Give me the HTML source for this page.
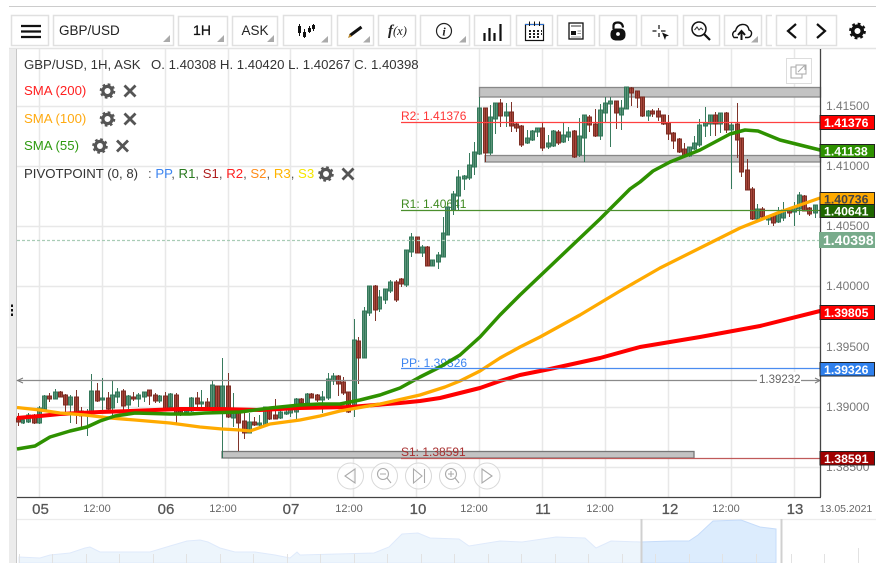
<!DOCTYPE html>
<html><head><meta charset="utf-8"><title>GBP/USD</title>
<style>
html,body{margin:0;padding:0;background:#fff;width:882px;height:573px;overflow:hidden}
svg{display:block}
text{font-family:"Liberation Sans",Arial,sans-serif}
.ax{font-size:12px;fill:#777}
.d{font-size:15px;fill:#555;text-anchor:middle;stroke:#555;stroke-width:.25}
.h{font-size:11px;fill:#666;text-anchor:middle}
.lg{font-size:13.2px}
.p{font-size:12.3px;font-weight:bold;fill:#fff}
.b{fill:#fff;stroke:#e0e0e0;stroke-width:1.5}
.t{fill:#aaa}
polyline{stroke-linejoin:round}
</style></head><body>
<svg width="882" height="573" viewBox="0 0 882 573" xmlns="http://www.w3.org/2000/svg">
<defs>
<g id="gear"><circle r="4.6" fill="none" stroke="#555" stroke-width="3.2"/><circle r="6.6" fill="none" stroke="#555" stroke-width="2.4" stroke-dasharray="2.6 2.58"/></g>
<path id="x" d="M-5.5-5.5L5.5 5.5M5.5-5.5L-5.5 5.5" stroke="#555" stroke-width="2.8" fill="none"/>
</defs>
<!-- top rules -->
<path d="M9 6.5H876" stroke="#ccc" stroke-width="1"/>
<path d="M9 48.5H876" stroke="#e4e4e4" stroke-width="1.5"/>
<!-- toolbar buttons -->
<rect class="b" x="11.5" y="15.5" width="37" height="30"/>
<rect class="b" x="53.5" y="15.5" width="120" height="30"/>
<rect class="b" x="178.5" y="16.5" width="49" height="29"/>
<rect class="b" x="232.5" y="16.5" width="45" height="29"/>
<rect class="b" x="283.5" y="15.5" width="48" height="30"/>
<rect class="b" x="337.5" y="15.5" width="36" height="30"/>
<rect class="b" x="378.5" y="15.5" width="37" height="30"/>
<rect class="b" x="420.5" y="15.5" width="49" height="30"/>
<rect class="b" x="474.5" y="15.5" width="36" height="30"/>
<rect class="b" x="516.5" y="15.5" width="36" height="30"/>
<rect class="b" x="557.5" y="15.5" width="37" height="30"/>
<rect class="b" x="599.5" y="15.5" width="37" height="30"/>
<rect class="b" x="641.5" y="15.5" width="36" height="30"/>
<rect class="b" x="683.5" y="15.5" width="36" height="30"/>
<rect class="b" x="724.5" y="15.5" width="37" height="30"/>
<path d="M772 15.5H766.5V45.5H772" fill="none" stroke="#e0e0e0" stroke-width="1.5"/>
<rect class="b" x="776.5" y="15.5" width="60" height="30"/>
<path d="M806.5 15.5V45.5" stroke="#e0e0e0" stroke-width="1.5"/>
<!-- dropdown corners -->
<path class="t" d="M170 35V42H163zM224 35V42H217zM274 35V42H267zM328 36V42.5H321zM370 36V42.5H363zM466 36V42.5H459zM758 36V42.5H751z"/>
<!-- hamburger -->
<path d="M21 26H41M21 31.5H41M21 37H41" stroke="#111" stroke-width="2.2"/>
<text x="59" y="35" font-size="13.5" fill="#222">GBP/USD</text>
<text x="202" y="35" font-size="14" fill="#111" text-anchor="middle" stroke="#111" stroke-width=".3">1H</text>
<text x="255" y="35" font-size="13.5" fill="#222" text-anchor="middle">ASK</text>
<!-- candles icon -->
<path d="M299.5 24V36M304.5 29V38M309.5 26V33M313.5 24V31" stroke="#111" stroke-width="1"/>
<path d="M298 26h3v7h-3zM303 32h3v5h-3zM308 28h3v4h-3zM312 25h3v4h-3z" fill="#111"/>
<!-- pen -->
<path d="M350 35.5L361.5 27" stroke="#111" stroke-width="3"/><path d="M348 38L349.5 34 352 36.5z" fill="#b8862a"/>
<text x="388" y="35" font-size="15" font-style="italic" style="font-family:'Liberation Serif',serif" fill="#222" font-weight="bold">f<tspan font-size="12.5" font-weight="normal">(x)</tspan></text>
<!-- info -->
<circle cx="444" cy="31" r="7.5" fill="none" stroke="#222" stroke-width="1.2"/>
<text x="444" y="35.5" font-size="12" font-style="italic" font-weight="bold" text-anchor="middle" style="font-family:'Liberation Serif',serif" fill="#222">i</text>
<!-- bars -->
<path d="M484.5 41V33M489.5 41V28M494.5 41V33M500.5 41V24" stroke="#111" stroke-width="2.2"/>
<!-- calendar -->
<rect x="525.5" y="24.5" width="18" height="16" fill="#fff" stroke="#111" stroke-width="1.2"/>
<path d="M525 24.5H544" stroke="#2a6fd0" stroke-width="1"/>
<path d="M529.5 21.5V26M534.5 21.5V26M539.5 21.5V26" stroke="#111" stroke-width="1"/>
<path d="M529 30h2v2h-2zM533 30h2v2h-2zM537 30h2v2h-2zM541 30h1v2h-1zM529 33h2v2h-2zM533 33h2v2h-2zM537 33h2v2h-2zM541 33h1v2h-1zM529 36h2v2h-2zM533 36h2v2h-2zM537 36h2v2h-2z" fill="#222"/>
<!-- news -->
<rect x="569" y="23" width="14" height="16" fill="#fff" stroke="#111" stroke-width="1.3"/>
<path d="M571 26H581" stroke="#777" stroke-width="1.5"/>
<rect x="571" y="31" width="5" height="4" fill="#111"/>
<path d="M577.5 31H581M577.5 33.5H581M571 37H581" stroke="#999" stroke-width="1"/>
<!-- lock -->
<path d="M613.5 29V26Q613.5 22.5 618 22.5Q622.5 22.5 623 27.5" fill="none" stroke="#111" stroke-width="2.2"/>
<rect x="610.5" y="28.5" width="15" height="12" rx="5" fill="#111"/>
<circle cx="618" cy="34" r="1.9" fill="#fff"/>
<!-- crosshair -->
<path d="M659 25V29M659 33V37M652.5 31H656.5M661 31H665.5" stroke="#111" stroke-width="1.2"/>
<path d="M662 32.5L669 35.5 666 36.5 665 40z" fill="#111"/>
<!-- chart zoom -->
<circle cx="699" cy="29" r="7" fill="none" stroke="#111" stroke-width="1.5"/>
<path d="M694.5 30L697 27 699 30 701 28 703 30" fill="none" stroke="#333" stroke-width="1"/>
<path d="M704 34L710 40" stroke="#111" stroke-width="2.2"/>
<!-- cloud -->
<path d="M738 37.5H734Q732 35 733 33Q734 31 735.5 31Q737 25 742 24.5Q748 24 749 30Q752 31 751.5 34Q751 37 748 37.5H745" fill="none" stroke="#111" stroke-width="1.4"/>
<path d="M741.5 40V32M738 35L741.5 31 745 35" fill="none" stroke="#111" stroke-width="2"/>
<!-- nav arrows -->
<path d="M796 24L788 31 796 38" fill="none" stroke="#111" stroke-width="2.2"/>
<path d="M817 24L825 31 817 38" fill="none" stroke="#111" stroke-width="2.2"/>
<!-- top gear -->
<g transform="translate(857.5,31)"><circle r="4.8" fill="none" stroke="#111" stroke-width="3.6"/><circle r="7.2" fill="none" stroke="#111" stroke-width="2.4" stroke-dasharray="2.8 2.85"/></g>

<!-- left strip -->
<rect x="9" y="49" width="7" height="514" fill="#ececec"/>
<path d="M16.5 49V563" stroke="#c8c8c8" stroke-width="1"/>
<path d="M12 304.5v2.5M12 309v2.5M12 313.5v2.5" stroke="#111" stroke-width="2"/>
<!-- grid -->
<path d="M39.5 49V497M102.5 49V497M165.5 49V497M228.5 49V497M290.5 49V497M353.5 49V497M416.5 49V497M479.5 49V497M542.5 49V497M605.5 49V497M668.5 49V497M731.5 49V497M794.5 49V497" stroke="#e8e8e8" stroke-width="1.5"/>
<path d="M17 106.5H820M17 166.5H820M17 226.5H820M17 286.5H820M17 347.5H820M17 407.5H820M17 467.5H820" stroke="#e8e8e8" stroke-width="1.5"/>
<!-- pivot text -->
<text x="401" y="120" font-size="12" fill="#ff3535">R2: 1.41376</text>
<text x="401" y="208" font-size="12" fill="#3f8a20">R1: 1.40641</text>
<text x="401" y="367" font-size="12" fill="#3d85f0">PP: 1.39326</text>
<!-- boxes -->
<rect x="479.5" y="87.5" width="341" height="9.5" fill="#c3c3c3" stroke="#888" stroke-width="1.3"/>
<rect x="485" y="155.5" width="335.5" height="6.5" fill="#c3c3c3" stroke="#888" stroke-width="1.3"/>
<rect x="222" y="451.5" width="472" height="6.5" fill="#c3c3c3" stroke="#777" stroke-width="1.3"/>
<text x="401" y="456" font-size="12" fill="#a83030">S1: 1.38591</text>
<!-- candles green -->
<path fill="#5b9479" stroke="#2f7556" stroke-width=".95" d="M23.5 418V424M21.5 420h3v3h-3zM28.5 413V423M26.5 415h4v7h-4zM39.5 406V424M37.5 408h4v15h-4zM44.5 395V412M42.5 396h4v13h-4zM55.5 389V399M53.5 392h4v7h-4zM70.5 395V423M68.5 397h4v8h-4zM87.5 409V436M85.5 413h4v3h-4zM91.5 374V417M89.5 391h4v22h-4zM102.5 378V412M100.5 398h4v2h-4zM112.5 381V416M110.5 395h4v13h-4zM117.5 388V403M115.5 392h4v5h-4zM128.5 395V409M126.5 396h4v9h-4zM138.5 393V407M136.5 395h4v4h-4zM144.5 392V402M142.5 392h4v5h-4zM159.5 395V403M157.5 396h4v5h-4zM170.5 393V409M168.5 394h4v13h-4zM186.5 407V413M184.5 408h4v4h-4zM191.5 397V412M189.5 398h4v13h-4zM201.5 390V407M199.5 402h4v2h-4zM212.5 380V413M210.5 385h4v24h-4zM222.5 358V458M220.5 386h4v27h-4zM233.5 393V427M231.5 412h4v6h-4zM249.5 413V433M247.5 422h4v11h-4zM259.5 415V427M257.5 423h4v2h-4zM265.5 407V426M263.5 407h4v18h-4zM280.5 408V419M278.5 412h4v6h-4zM286.5 410V415M284.5 412h4v2h-4zM290.5 407V417M288.5 410h4v3h-4zM296.5 398V419M294.5 399h4v13h-4zM307.5 393V404M305.5 394h4v9h-4zM322.5 391V413M320.5 397h4v3h-4zM328.5 373V400M326.5 379h4v19h-4zM333.5 373V385M331.5 376h4v5h-4zM354.5 319V417M352.5 340h4v65h-4zM364.5 307V358M362.5 311h4v47h-4zM369.5 286V316M367.5 286h4v27h-4zM379.5 290V312M377.5 297h4v12h-4zM385.5 289V304M383.5 289h4v11h-4zM390.5 280V293M388.5 282h4v9h-4zM406.5 250V287M404.5 250h4v35h-4zM411.5 233V257M409.5 237h4v15h-4zM422.5 245V257M420.5 247h4v6h-4zM432.5 260V266M430.5 260h4v6h-4zM438.5 252V269M436.5 255h4v7h-4zM443.5 217V257M441.5 233h4v24h-4zM447.5 207V235M445.5 207h4v28h-4zM453.5 191V215M451.5 194h4v16h-4zM458.5 170V210M456.5 177h4v19h-4zM464.5 175V190M462.5 176h4v3h-4zM469.5 153V180M467.5 165h4v13h-4zM474.5 142V175M472.5 152h4v15h-4zM479.5 97V155M477.5 108h4v46h-4zM490.5 105V155M488.5 117h4v36h-4zM495.5 103V134M493.5 103h4v16h-4zM506.5 103V127M504.5 112h4v4h-4zM527.5 130V144M525.5 138h4v5h-4zM532.5 130V141M530.5 131h4v9h-4zM537.5 128V137M535.5 128h4v4h-4zM548.5 135V149M546.5 143h4v4h-4zM553.5 130V147M551.5 131h4v15h-4zM563.5 122V143M561.5 135h4v7h-4zM568.5 127V141M566.5 132h4v5h-4zM579.5 118V157M577.5 136h4v19h-4zM584.5 115V162M582.5 115h4v23h-4zM600.5 104V140M598.5 110h4v26h-4zM605.5 97V122M603.5 103h4v10h-4zM610.5 97V147M608.5 101h4v3h-4zM621.5 100V130M619.5 108h4v7h-4zM626.5 87V109M624.5 87h4v22h-4zM648.5 110V121M646.5 111h4v5h-4zM689.5 147V157M687.5 147h4v9h-4zM694.5 136V150M692.5 143h4v6h-4zM699.5 119V147M697.5 125h4v20h-4zM705.5 107V137M703.5 123h4v3h-4zM710.5 115V136M708.5 115h4v9h-4zM720.5 113V133M718.5 113h4v11h-4zM731.5 123V189M729.5 125h4v5h-4zM757.5 204V219M755.5 209h4v10h-4zM768.5 215V225M766.5 216h4v4h-4zM778.5 207V223M776.5 214h4v8h-4zM783.5 202V221M781.5 210h4v8h-4zM794.5 202V226M792.5 207h4v5h-4zM799.5 192V215M797.5 195h4v14h-4zM815.5 205V218M813.5 205h4v8h-4z"/>
<!-- candles red -->
<path fill="#a8473c" stroke="#7a2a20" stroke-width=".95" d="M18.5 413V426M16.5 418h4v4h-4zM34.5 414V424M32.5 415h4v8h-4zM49.5 393V402M47.5 396h4v3h-4zM60.5 391V397M58.5 392h4v5h-4zM65.5 394V412M63.5 395h4v10h-4zM76.5 390V424M74.5 397h4v15h-4zM81.5 407V427M79.5 411h4v5h-4zM97.5 383V402M95.5 391h4v10h-4zM108.5 392V413M106.5 398h4v11h-4zM123.5 389V412M121.5 391h4v15h-4zM133.5 392V401M131.5 397h4v2h-4zM149.5 390V405M147.5 390h4v6h-4zM155.5 393V403M153.5 395h4v6h-4zM165.5 392V409M163.5 396h4v12h-4zM176.5 393V424M174.5 395h4v18h-4zM180.5 409V416M178.5 411h4v2h-4zM197.5 392V409M195.5 398h4v6h-4zM207.5 398V409M205.5 402h4v6h-4zM217.5 386V413M215.5 386h4v26h-4zM228.5 373V418M226.5 386h4v31h-4zM238.5 410V451M236.5 411h4v12h-4zM244.5 413V439M242.5 421h4v12h-4zM254.5 417V426M252.5 422h4v3h-4zM269.5 407V420M267.5 407h4v12h-4zM275.5 399V419M273.5 415h4v4h-4zM301.5 398V408M299.5 399h4v4h-4zM311.5 393V398M309.5 394h4v4h-4zM317.5 394V402M315.5 395h4v5h-4zM338.5 375V396M336.5 376h4v8h-4zM343.5 377V395M341.5 382h4v11h-4zM348.5 392V413M346.5 392h4v20h-4zM358.5 337V384M356.5 341h4v17h-4zM375.5 285V321M373.5 286h4v24h-4zM396.5 280V302M394.5 282h4v18h-4zM401.5 278V287M399.5 279h4v5h-4zM417.5 237V253M415.5 237h4v16h-4zM427.5 246V266M425.5 247h4v19h-4zM485.5 108V162M483.5 108h4v45h-4zM500.5 99V127M498.5 103h4v13h-4zM511.5 102V132M509.5 112h4v14h-4zM516.5 123V132M514.5 124h4v4h-4zM521.5 125V147M519.5 126h4v19h-4zM542.5 123V151M540.5 128h4v20h-4zM558.5 130V145M556.5 132h4v11h-4zM574.5 130V158M572.5 131h4v26h-4zM589.5 115V132M587.5 117h4v8h-4zM595.5 109V137M593.5 124h4v12h-4zM616.5 101V129M614.5 101h4v12h-4zM631.5 87V106M629.5 88h4v5h-4zM637.5 91V108M635.5 91h4v7h-4zM642.5 97V117M640.5 97h4v19h-4zM652.5 109V117M650.5 111h4v3h-4zM658.5 108V121M656.5 111h4v6h-4zM663.5 115V125M661.5 115h4v9h-4zM668.5 115V140M666.5 123h4v11h-4zM673.5 132V149M671.5 133h4v8h-4zM679.5 138V153M677.5 139h4v13h-4zM684.5 143V157M682.5 149h4v7h-4zM715.5 112V136M713.5 115h4v9h-4zM726.5 112V133M724.5 113h4v17h-4zM737.5 103V158M735.5 124h4v16h-4zM741.5 138V177M739.5 138h4v34h-4zM747.5 159V190M745.5 170h4v20h-4zM752.5 187V220M750.5 189h4v30h-4zM762.5 207V220M760.5 209h4v8h-4zM773.5 214V226M771.5 215h4v8h-4zM789.5 208V217M787.5 210h4v3h-4zM804.5 195V211M802.5 196h4v15h-4zM809.5 207V216M807.5 208h4v6h-4z"/>
<!-- dashed close -->
<path d="M17 240.5H820" stroke="#a9ccb6" stroke-width="1.2" stroke-dasharray="3 2"/>
<!-- MAs -->
<polyline fill="none" stroke="#ff0000" stroke-width="4" points="17,418 40,416 60,414 100,412 130,411 180,409 220,409 260,410 300,408 350,407 400,403 420,401 440,398 460,393 480,388 500,381 520,375 550,369 600,358 640,347 700,337 760,326 820,311"/>
<polyline fill="none" stroke="#ffaa00" stroke-width="3.3" points="17,407.5 40,410 60,413 85,415 110,418 135,420 170,423 200,427 222,429 240,430 250,431 270,424 300,420 320,416 340,411 380,404 420,395 445,387 460,381 480,371 500,358 520,347 540,337 580,315 620,291 660,268 700,248 740,228 780,212 820,198"/>
<polyline fill="none" stroke="#2e9100" stroke-width="3.5" points="17,449 35,446 50,437 70,431 87,427 100,421 115,416 135,413 170,414 190,414 205,413 240,412 270,408 300,405 320,404 340,404 360,400 380,395 400,388 420,377 440,367 460,355 480,337 500,315 520,295 540,276 560,257 580,238 600,219 620,199 630,189 640,182 653,171 670,162 700,150 730,134 745,130 758,131 780,140 800,145 820,150"/>
<!-- level lines -->
<path d="M401 122.500H820" stroke="#ff4040" stroke-width="1.3"/>
<path d="M401 210.500H820" stroke="#4c8f2e" stroke-width="1.2"/>
<path d="M401 368.500H820" stroke="#4a8cf0" stroke-width="1.2"/>
<path d="M401 458.500H820" stroke="#c05a5a" stroke-width="1.3"/>
<!-- ruler -->
<path d="M17 380.500H820" stroke="#8a8a8a" stroke-width="1.2"/>
<path d="M23 378L17.500 380.500 23 383M815 378L820 380.500 815 383" fill="none" stroke="#777" stroke-width="1"/>
<rect x="757" y="372" width="44" height="14" fill="#fff"/>
<text x="759" y="383" font-size="11.5" fill="#666">1.39232</text>
<!-- axes -->
<path d="M820.5 49V497" stroke="#444" stroke-width="1.3"/>
<path d="M17 497.5H821" stroke="#444" stroke-width="1.3"/>
<text class="ax" x="826" y="110">1.41500</text>
<text class="ax" x="826" y="170">1.41000</text>
<text class="ax" x="826" y="230">1.40500</text>
<text class="ax" x="826" y="290">1.40000</text>
<text class="ax" x="826" y="351">1.39500</text>
<text class="ax" x="826" y="411">1.39000</text>
<text class="ax" x="826" y="471">1.38500</text>
<!-- price tags -->
<rect x="820" y="115.5" width="54.5" height="14" fill="#ff0000" stroke="#222"/><text class="p" x="824" y="127">1.41376</text>
<rect x="820" y="144.5" width="54.5" height="13" fill="#2e9100" stroke="#222"/><text class="p" x="824" y="155.5">1.41138</text>
<rect x="820" y="192.5" width="54.5" height="13" fill="#ffaa00" stroke="#222"/><text class="p" x="824" y="203.5" style="fill:#444">1.40736</text>
<rect x="820" y="204.5" width="54.5" height="13" fill="#1f6600" stroke="#222"/><text class="p" x="824" y="215.5">1.40641</text>
<rect x="819" y="232" width="56" height="16" fill="#78ab8b"/><text x="823" y="245" font-size="14" font-weight="bold" fill="#fff">1.40398</text>
<rect x="820" y="305.5" width="54.5" height="14" fill="#ff0000" stroke="#222"/><text class="p" x="824" y="317">1.39805</text>
<rect x="820" y="362.5" width="54.5" height="13.5" fill="#2f80ed" stroke="#222"/><text class="p" x="824" y="374">1.39326</text>
<rect x="820" y="451.5" width="54.5" height="13.5" fill="#a00000" stroke="#222"/><text class="p" x="824" y="463">1.38591</text>
<!-- expand icon -->
<rect x="786.5" y="58.5" width="25" height="25" fill="#fff" stroke="#ddd"/>
<rect x="791" y="67" width="11" height="11" fill="#fff" stroke="#aaa"/>
<rect x="796" y="65" width="10" height="9" fill="#fff" stroke="#aaa"/>
<path d="M798 72L805 65M800 65H805V70" fill="none" stroke="#aaa"/>
<!-- legend -->
<text class="lg" x="24" y="69" fill="#333">GBP/USD, 1H, ASK</text>
<text class="lg" x="151" y="69" fill="#333">O. 1.40308 H. 1.40420 L. 1.40267 C. 1.40398</text>
<text class="lg" x="24" y="95" fill="#ff2020">SMA (200)</text>
<use href="#gear" x="107.5" y="91"/><use href="#x" x="130" y="91"/>
<text class="lg" x="24" y="123" fill="#ffaa11">SMA (100)</text>
<use href="#gear" x="107.5" y="119"/><use href="#x" x="130" y="119"/>
<text class="lg" x="24" y="150" fill="#2e9a10">SMA (55)</text>
<use href="#gear" x="100" y="146"/><use href="#x" x="122.5" y="146"/>
<text class="lg" x="24" y="178" fill="#333">PIVOTPOINT (0, 8)</text>
<text class="lg" x="148" y="178" fill="#555">: <tspan fill="#3d85f0">PP</tspan>, <tspan fill="#2a7a20">R1</tspan>, <tspan fill="#b02020">S1</tspan>, <tspan fill="#ff2020">R2</tspan>, <tspan fill="#ff8c1a">S2</tspan>, <tspan fill="#ffb300">R3</tspan>, <tspan fill="#f5e600">S3</tspan></text>
<use href="#gear" x="326" y="174"/><use href="#x" x="348" y="174"/>
<!-- bottom nav -->
<g fill="#fff" fill-opacity=".6" stroke="#d8d8d8">
<circle cx="350.5" cy="476" r="13"/><circle cx="384.5" cy="476" r="13"/><circle cx="418.5" cy="476" r="13"/><circle cx="452.5" cy="476" r="13"/><circle cx="487" cy="476" r="13"/></g>
<g fill="none" stroke="#aaa" stroke-width="1.1">
<path d="M355 469L345 476 355 483z"/>
<circle cx="383" cy="474" r="5.5"/><path d="M380 474H386M387 478L391 483"/>
<path d="M413.5 469L422 476 413.5 483zM424.5 469V483"/>
<circle cx="451" cy="474" r="5.5"/><path d="M448 474H454M451 471V477M455 478L459 483"/>
<path d="M482 469L492 476 482 483z"/></g>
<!-- date axis -->
<text class="d" x="40.5" y="514">05</text>
<text class="h" x="97" y="512">12:00</text>
<text class="d" x="166" y="514">06</text>
<text class="h" x="223" y="512">12:00</text>
<text class="d" x="291" y="514">07</text>
<text class="h" x="349" y="512">12:00</text>
<text class="d" x="418" y="514">10</text>
<text class="h" x="474" y="512">12:00</text>
<text class="d" x="543" y="514">11</text>
<text class="h" x="600" y="512">12:00</text>
<text class="d" x="670" y="514">12</text>
<text class="h" x="726" y="512">12:00</text>
<text class="d" x="795" y="514">13</text>
<text x="846" y="512" font-size="10.5" fill="#666" text-anchor="middle">13.05.2021</text>
<path d="M17 519.5H876" stroke="#ececec" stroke-width="1.2"/>
<!-- navigator -->
<polygon fill="#edf5fc" stroke="#dfeafb" points="19,563 19,557 40,558 50,555 70,553 85,548 90,547 100,552 120,552 150,552 170,546 187,541 200,540 208,542 220,548 235,552 255,552 275,555 290,558 297,552 300,555 374,553 389,547 402,534 418,533 430,538 459,539 469,546 500,541 522,542 556,537 585,538 596,548 611,541 641,542 641,563"/>
<polygon fill="#dcecfd" stroke="#c6dcfa" points="641,563 641,542 671,541 689,541 698,535 713,521 741,520 760,527 776,529 776,563"/>
<path d="M19.5 554V563M52.5 554V563M86.5 554V563M119.5 554V563M153.5 554V563M186.5 554V563M220.5 554V563M253.5 554V563M287.5 554V563M320.5 554V563M354.5 554V563M387.5 554V563M421.5 554V563M454.5 554V563M488.5 554V563M521.5 554V563M555.5 554V563M588.5 554V563M622.5 554V563M655.5 554V563M689.5 554V563M722.5 554V563M756.5 554V563M791.5 554V563M824.5 554V563M858.5 548V563" stroke="#e2e2e2" stroke-width="1"/>
<path d="M641.5 519V563M781.5 519V563" stroke="#d0d0d0" stroke-width="2"/>
<rect x="0" y="563" width="882" height="10" fill="#fff"/>
</svg>
</body></html>
